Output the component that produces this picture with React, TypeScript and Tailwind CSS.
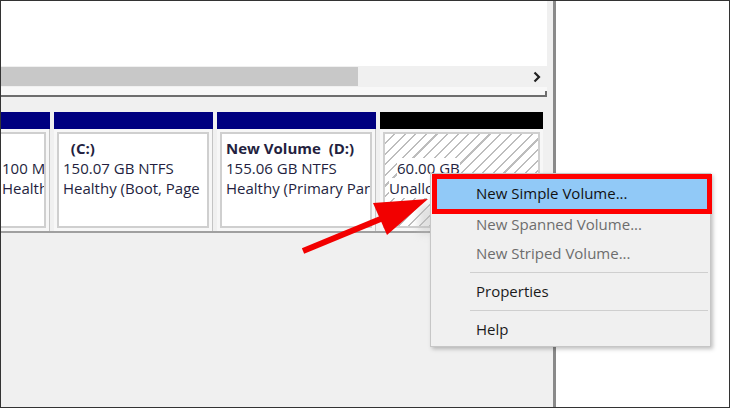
import React from 'react';

const font = { fontFamily: '"Open Sans", "Noto Sans", sans-serif' };

type Part = {
  label?: string;
  size: string;
  status: string;
};

const Column: React.FC<{ part: Part; width: string }> = ({ part, width }) => (
  <div className={`${width} flex flex-col shrink-0`}>
    <div className="h-[17px] bg-[#000080]" />
    <div className="flex-1 bg-[#f7f7f7] p-[3px] border-r border-[#c4c4c4]">
      <div className="h-full border-2 border-[#cfcfcf] bg-white pt-[4px] pl-[4px] overflow-hidden whitespace-nowrap text-[15px] leading-[20px] text-[#241f40]">
        <div className="font-bold whitespace-pre">{part.label ?? '\u00a0'}</div>
        <div>{part.size}</div>
        <div>{part.status}</div>
      </div>
    </div>
  </div>
);

export default function App() {
  return (
    <div
      className="relative w-[730px] h-[408px] border border-[#333333] flex overflow-hidden bg-white"
      style={font}
    >
      {/* left pane */}
      <div className="w-[552px] flex flex-col bg-[#f0f0f0]">
        <div className="h-[65px] bg-white mr-[6px]" />
        <div className="h-[21px] bg-[#f0f0f0] mr-[6px] flex items-center">
          <div className="w-[357px] h-[19px] bg-[#c8c8c8]" />
          <div className="flex-1" />
          <svg width="10" height="12" viewBox="0 0 10 12" className="mr-[5px]">
            <path d="M2.5 1.5 L7 6 L2.5 10.5" fill="none" stroke="#222" strokeWidth="2.2" />
          </svg>
        </div>
        <div className="h-[8px] bg-[#f8f8f8] mr-[6px] flex justify-end">
          <div className="w-[2px] h-[4px] mt-[4px] bg-[#6e6e6e]" />
        </div>
        <div className="h-[2px] bg-[#6e6e6e] mr-[6px]" />

        {/* disk row */}
        <div className="h-[134px] flex flex-col mr-[6px]">
          <div className="h-[15px] bg-[#f0f0f0]" />
          <div className="flex-1 flex gap-[4px] bg-[#f0f0f0]">
            <div className="w-[49px] flex flex-col shrink-0">
              <div className="h-[17px] bg-[#000080]" />
              <div className="flex-1 bg-[#f7f7f7] py-[3px] pr-[3px] border-r border-[#c4c4c4]">
                <div className="h-full border-2 border-l-0 border-[#cfcfcf] bg-white pt-[4px] pl-px overflow-hidden whitespace-nowrap text-[15px] leading-[20px] text-[#241f40]">
                  <div>{'\u00a0'}</div>
                  <div>100 MB NTFS</div>
                  <div>Healthy (System</div>
                </div>
              </div>
            </div>
            <Column
              width="w-[159px]"
              part={{ label: '  (C:)', size: '150.07 GB NTFS', status: 'Healthy (Boot, Page' }}
            />
            <Column
              width="w-[159px]"
              part={{ label: 'New Volume  (D:)', size: '155.06 GB NTFS', status: 'Healthy (Primary Partition)' }}
            />
            <div className="w-[163px] flex flex-col shrink-0">
              <div className="h-[17px] bg-black" />
              <div className="flex-1 bg-[#f7f7f7] p-[3px]">
                <div className="h-full border-2 border-[#cfcfcf] bg-[repeating-linear-gradient(135deg,#ffffff_0px,#ffffff_6px,#bdbdbd_6px,#bdbdbd_7.5px)] pt-[4px] pl-[4px] overflow-hidden whitespace-nowrap text-[15px] leading-[20px] text-[#241f40]">
                  <div>{'\u00a0'}</div>
                  <div className="pl-[8px]">
                    <span className="bg-white">60.00 GB</span>
                  </div>
                  <div>
                    <span className="bg-white">Unallocated</span>
                  </div>
                </div>
              </div>
            </div>
          </div>
        </div>
        <div className="h-[2px] bg-[#a0a0a0]" />
        <div className="flex-1 bg-[#f0f0f0]" />
      </div>

      {/* splitter */}
      <div className="w-[3px] bg-[#8a8a8a]" />
      <div className="flex-1 bg-white" />

      {/* smear left of the menu */}
      <div className="absolute left-[418px] top-[204px] w-[14px] h-[28px] bg-[#bdbdbd] blur-[4px] opacity-50" />

      {/* context menu */}
      <div className="absolute left-[429px] top-[172px] w-[281px] h-[174px] bg-[#f0f0f0] border border-[#c6c6c6] shadow-[2px_2px_4px_rgba(0,0,0,0.25)] pt-[4px] flex flex-col text-[15px] text-[#1b1b1b]">
        <div className="h-[30px] shrink-0 mt-px ml-[6px] mr-[3px] outline-[5px] outline-solid outline-[#ff0000] bg-[#91c9f7] flex items-center pl-[39px] text-[#111]">
          <span className="-mt-[2px]">New Simple Volume...</span>
        </div>
        <div className="h-[30px] shrink-0 flex items-center pl-[45px] text-[#6d6d6d]">New Spanned Volume...</div>
        <div className="h-[29px] shrink-0 flex items-center pl-[45px] text-[#6d6d6d]">New Striped Volume...</div>
        <div className="h-[8px] shrink-0 flex items-center pl-[39px] pr-[2px]">
          <div className="h-px w-full bg-[#cfcfcf]" />
        </div>
        <div className="h-[30px] shrink-0 flex items-center pl-[45px] font-medium">Properties</div>
        <div className="h-[8px] shrink-0 flex items-center pl-[39px] pr-[2px]">
          <div className="h-px w-full bg-[#cfcfcf]" />
        </div>
        <div className="h-[30px] shrink-0 flex items-center pl-[45px] font-medium">Help</div>
      </div>

      {/* arrow */}
      <svg className="absolute left-0 top-0 pointer-events-none" width="730" height="408">
        <line x1="302" y1="250" x2="382" y2="217" stroke="#f20000" strokeWidth="6" />
        <polygon points="427,198 372,202 386,234" fill="#f20000" />
      </svg>
    </div>
  );
}
